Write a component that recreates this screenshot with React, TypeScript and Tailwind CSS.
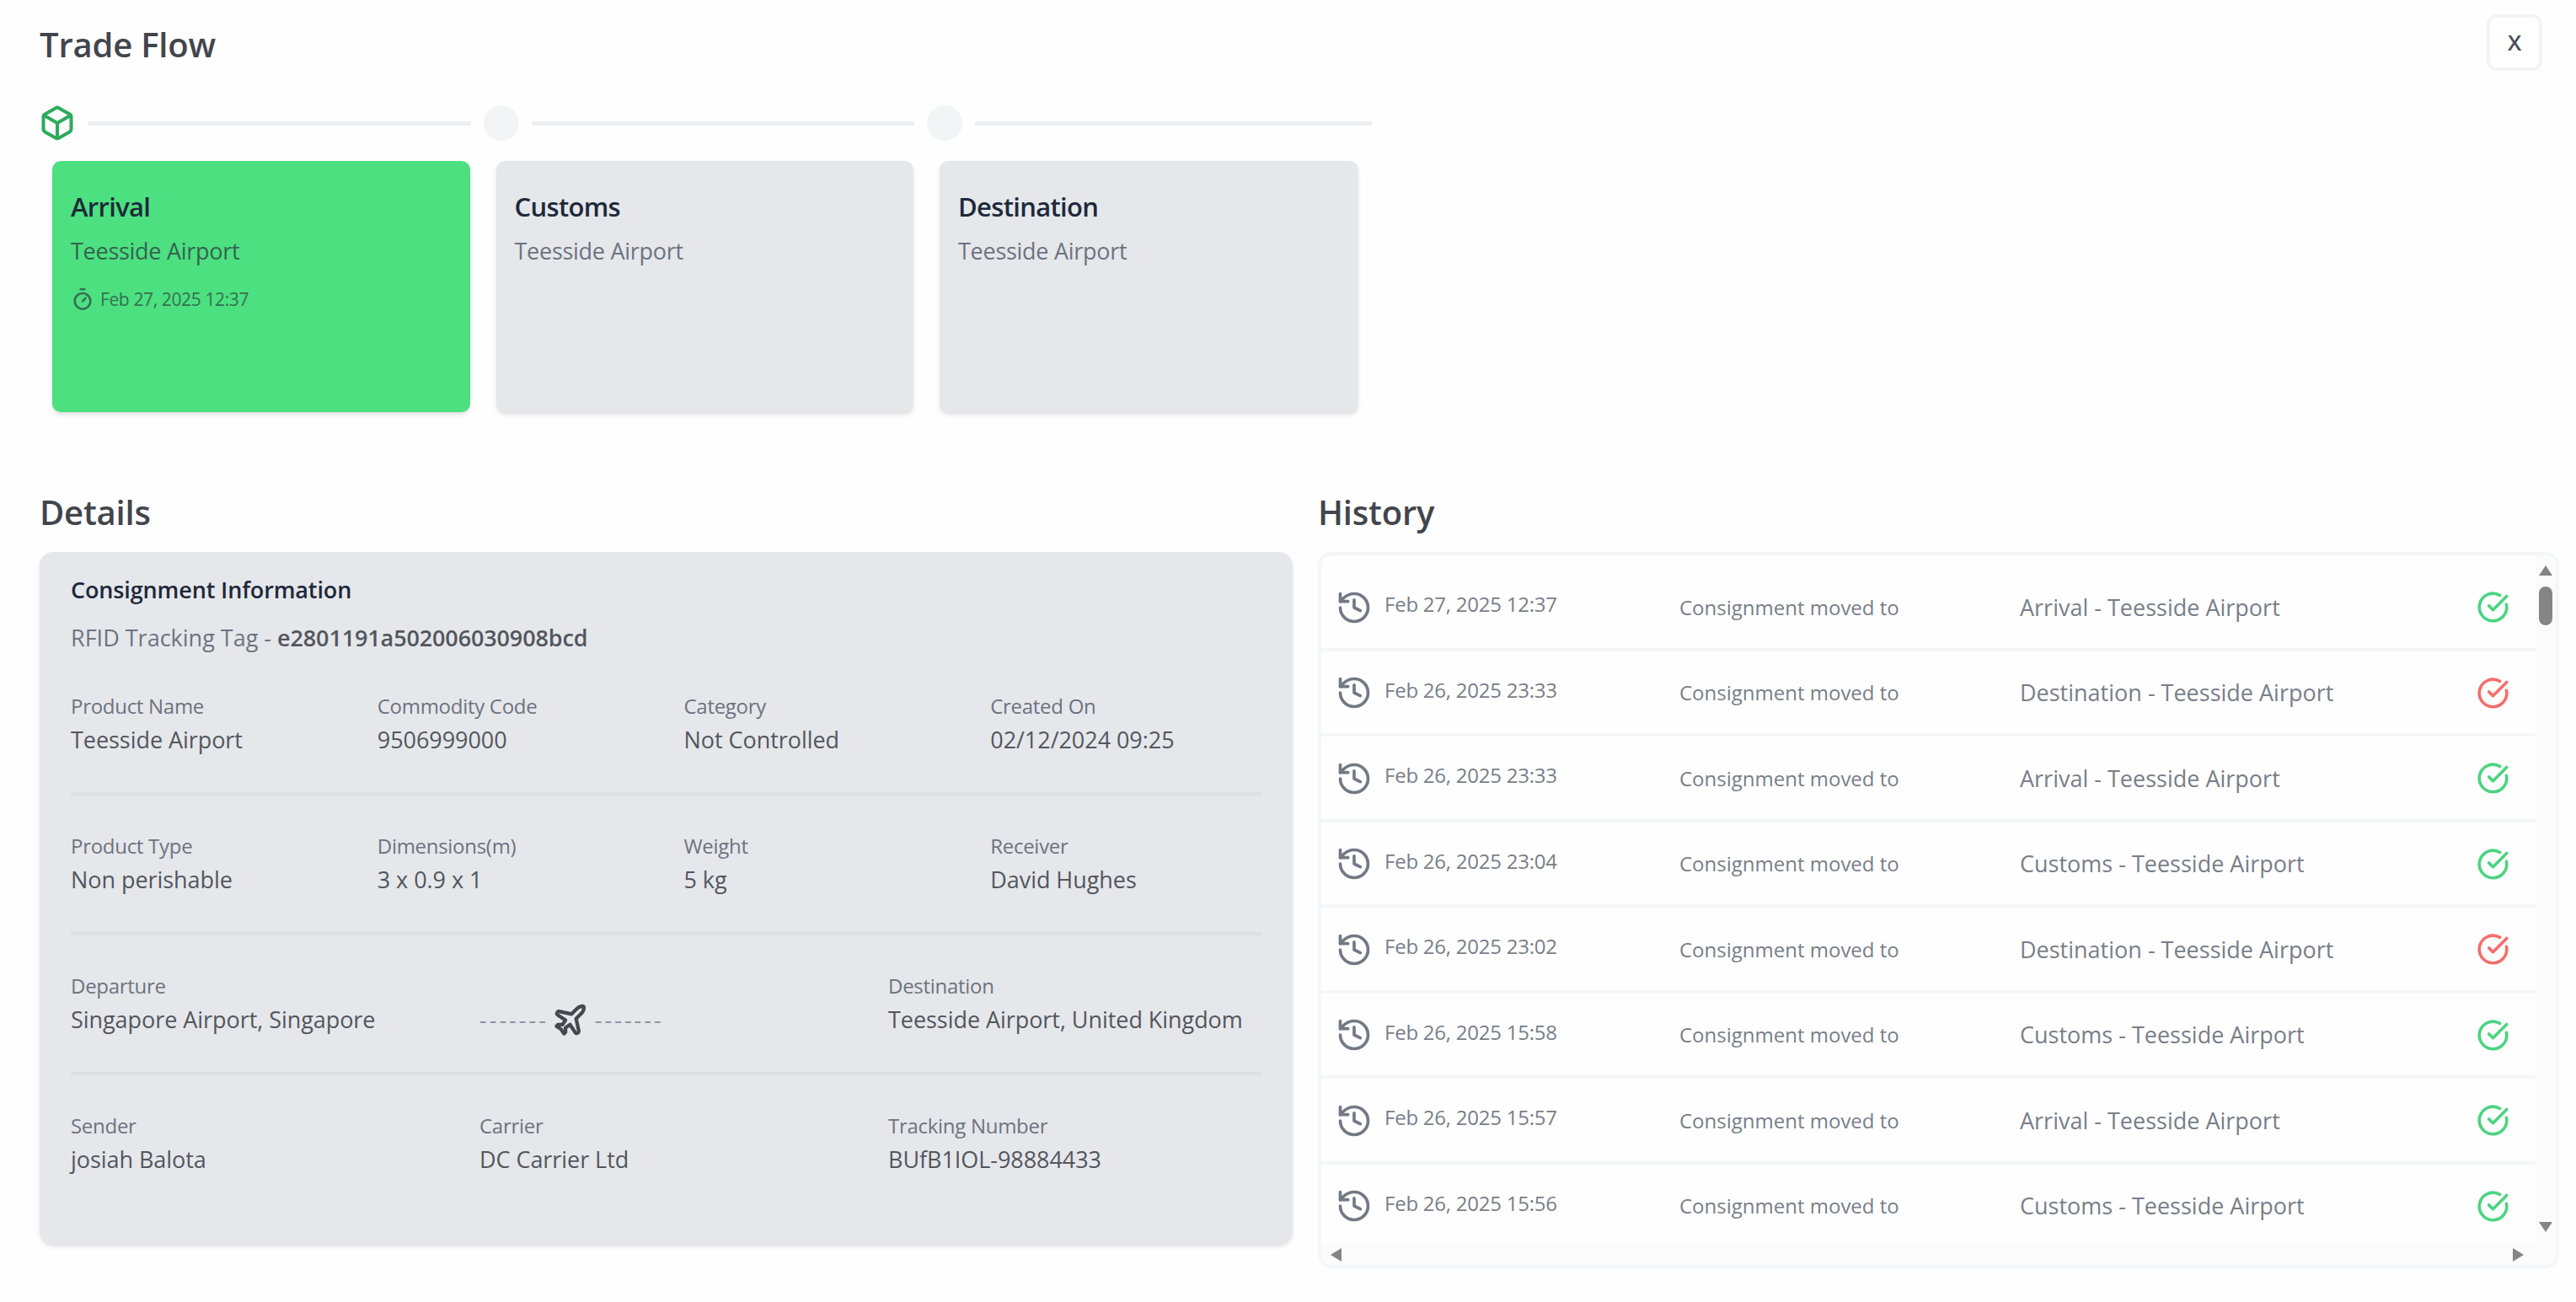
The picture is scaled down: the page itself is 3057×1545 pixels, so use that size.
import { Box, CircleCheckBig, History, Plane, Timer } from 'lucide-react';
import { clsx } from 'clsx';

/* ─── Data ───────────────────────────────────────────────────────────────── */

const STEPS: { title: string; place: string; date?: string }[] = [
  { title: 'Arrival', place: 'Teesside Airport', date: 'Feb 27, 2025 12:37' },
  { title: 'Customs', place: 'Teesside Airport' },
  { title: 'Destination', place: 'Teesside Airport' },
];

const PRODUCT = [
  { label: 'Product Name', value: 'Teesside Airport' },
  { label: 'Commodity Code', value: '9506999000' },
  { label: 'Category', value: 'Not Controlled' },
  { label: 'Created On', value: '02/12/2024 09:25' },
];

const SPECS = [
  { label: 'Product Type', value: 'Non perishable' },
  { label: 'Dimensions(m)', value: '3 x 0.9 x 1' },
  { label: 'Weight', value: '5 kg' },
  { label: 'Receiver', value: 'David Hughes' },
];

const SHIPPING = [
  { label: 'Sender', value: 'josiah Balota' },
  { label: 'Carrier', value: 'DC Carrier Ltd' },
  { label: 'Tracking Number', value: 'BUfB1IOL-98884433' },
];

const HISTORY = [
  { date: 'Feb 27, 2025 12:37', step: 'Arrival', ok: true },
  { date: 'Feb 26, 2025 23:33', step: 'Destination', ok: false },
  { date: 'Feb 26, 2025 23:33', step: 'Arrival', ok: true },
  { date: 'Feb 26, 2025 23:04', step: 'Customs', ok: true },
  { date: 'Feb 26, 2025 23:02', step: 'Destination', ok: false },
  { date: 'Feb 26, 2025 15:58', step: 'Customs', ok: true },
  { date: 'Feb 26, 2025 15:57', step: 'Arrival', ok: true },
  { date: 'Feb 26, 2025 15:56', step: 'Customs', ok: true },
];

/* ─── Shared ─────────────────────────────────────────────────────────────── */

function Heading({ children }: { children: string }) {
  return (
    <h2 className="text-[40px] leading-[56px] font-semibold tracking-[-0.005em] text-[#42454c]">{children}</h2>
  );
}

function Field({ label, value }: { label: string; value: string }) {
  return (
    <div className="whitespace-nowrap">
      <p className="text-[24px] leading-10 tracking-[-0.012em] text-[#6d737f]">{label}</p>
      <p className="text-[27px] leading-10 tracking-[-0.002em] text-[#53565d]">{value}</p>
    </div>
  );
}

function Divider() {
  return <hr className="mt-[42px] mb-[40px] h-1 border-0 bg-[#dddfe3]" />;
}

/* ─── Timeline ───────────────────────────────────────────────────────────── */

function Timeline() {
  return (
    <ol className="flex pl-[47px]">
      {STEPS.map(({ title, place, date }) => (
        <li key={title} className="group w-[526.5px] last:w-[543px]">
          <div className="flex h-[42px] items-center">
            {date ? (
              <span className="flex w-[42px] justify-center pr-[1px]">
                <Box size={44} strokeWidth={2.2} className="shrink-0 text-[#2bab5c]" />
              </span>
            ) : (
              <span className="size-[42px] rounded-full bg-gray-100" />
            )}
            <span className="mr-[15px] ml-[15px] h-[5px] flex-1 bg-[#eceff2]" />
          </div>

          <div
            className={clsx(
              'mt-[24px] mr-4 ml-[15px] h-[298px] rounded-[10px] px-[22px] pt-[34px] shadow-md group-last:mr-[31px]',
              date ? 'bg-[#4ce081]' : 'bg-gray-200',
            )}
          >
            <h3 className="text-[31px] leading-10 font-semibold tracking-[-0.022em] text-gray-800">{title}</h3>
            <p
              className={clsx(
                'mt-[13px] text-[27px] leading-10 tracking-[-0.01em]',
                date ? 'text-[#35644f]' : 'text-[#6d737f]',
              )}
            >
              {place}
            </p>
            {date && (
              <p className="mt-[17px] flex items-center gap-[7px] text-[21px] leading-10 tracking-[-0.018em] text-[#35704f]">
                <Timer size={28} strokeWidth={2.2} />
                {date}
              </p>
            )}
          </div>
        </li>
      ))}
    </ol>
  );
}

/* ─── Details ────────────────────────────────────────────────────────────── */

function Details() {
  return (
    <section className="w-[1487px]">
      <Heading>Details</Heading>
      <div className="mt-[19px] h-[821px] rounded-2xl bg-gray-200 px-[37px] pt-[25px] shadow-md">
        <h3 className="text-[27px] leading-10 font-semibold tracking-[-0.005em] text-gray-800">
          Consignment Information
        </h3>
        <p className="mt-[17px] text-[27px] leading-10 text-[#6d737f]">
          RFID Tracking Tag -{' '}
          <span className="font-semibold tracking-[-0.005em] text-[#53565d]">e2801191a502006030908bcd</span>
        </p>

        <div className="mt-[41px] grid grid-cols-4 gap-[42px]">
          {PRODUCT.map((f) => <Field key={f.label} {...f} />)}
        </div>
        <Divider />
        <div className="grid grid-cols-4 gap-[42px]">
          {SPECS.map((f) => <Field key={f.label} {...f} />)}
        </div>
        <Divider />
        <div className="grid grid-cols-3 gap-[42px]">
          <Field label="Departure" value="Singapore Airport, Singapore" />
          <div className="flex h-10 items-center self-end text-[27px] leading-10 tracking-[3px] text-[#8d93a0]">
            <span>-------</span>
            <Plane size={43} strokeWidth={2.4} className="mr-[8px] ml-[4px] text-[#45484e]" />
            <span>-------</span>
          </div>
          <Field label="Destination" value="Teesside Airport, United Kingdom" />
        </div>
        <Divider />
        <div className="grid grid-cols-3 gap-[42px]">
          {SHIPPING.map((f) => <Field key={f.label} {...f} />)}
        </div>
      </div>
    </section>
  );
}

/* ─── History ────────────────────────────────────────────────────────────── */

function HistoryList() {
  return (
    <section className="w-[1473px]">
      <Heading>History</Heading>
      <div className="mt-[19px] flex h-[850px] flex-col overflow-hidden rounded-2xl border-4 border-[#f5f6f8]">
        <div className="flex min-h-0 flex-1">
          <ul className="flex-1 overflow-hidden pt-[12px]">
            {HISTORY.map(({ date, step, ok }, i) => (
              <li
                key={i}
                className="flex h-[101.5px] items-center border-b-4 border-[#f5f6f7] pt-[2px] whitespace-nowrap text-[#787e89]"
              >
                <History size={44} strokeWidth={2} className="ml-[17px] shrink-0 text-[#737984]" />
                <span className="-mt-[7px] ml-[14px] w-[350px] text-[24px] leading-10 tracking-[-0.01em]">
                  {date}
                </span>
                <span className="w-[404px] text-[24px] leading-10">Consignment moved to</span>
                <span className="w-[542px] text-[27px] leading-10">{step} - Teesside Airport</span>
                <CircleCheckBig
                  size={39}
                  strokeWidth={2.2}
                  className={clsx('shrink-0', ok ? 'text-[#4bd481]' : 'text-[#f76c6c]')}
                />
              </li>
            ))}
          </ul>

          {/* Vertical scrollbar */}
          <div className="flex w-[24px] flex-col items-center justify-between bg-[#fbfbfb] pt-[12px] pb-[14px]">
            <div>
              <svg width="16" height="12" viewBox="0 0 16 12" fill="#858585">
                <path d="M8 0 16 12H0z" />
              </svg>
              <div className="mt-[13px] h-[46px] w-4 rounded-full bg-[#858585]" />
            </div>
            <svg width="16" height="12" viewBox="0 0 16 12" fill="#858585">
              <path d="M8 12 16 0H0z" />
            </svg>
          </div>
        </div>

        {/* Horizontal scrollbar */}
        <div className="flex h-[25px] items-center justify-between bg-[#fbfbfb] pr-[38px] pl-[11px]">
          <svg width="13" height="16" viewBox="0 0 13 16" fill="#858585">
            <path d="M0 8 13 0v16z" />
          </svg>
          <svg width="13" height="16" viewBox="0 0 13 16" fill="#858585">
            <path d="M13 8 0 0v16z" />
          </svg>
        </div>
      </div>
    </section>
  );
}

/* ─── App ────────────────────────────────────────────────────────────────── */

export default function App() {
  return (
    <main className="h-[1545px] w-[3057px] overflow-hidden bg-[#fefefe] font-['Open_Sans',sans-serif]">
      <header className="flex h-[125px] items-start justify-between pt-[17px] pr-[40px] pl-[47px]">
        <div className="mt-2">
          <Heading>Trade Flow</Heading>
        </div>
        <button
          type="button"
          className="flex h-[67px] w-[66px] items-center justify-center rounded-xl border-4 border-[#f3f3f3] bg-white pb-[1px] text-[26px] font-semibold text-[#4b4f57]"
        >
          X
        </button>
      </header>

      <Timeline />

      <div className="mt-[91px] flex gap-[30px] pl-[47px]">
        <Details />
        <HistoryList />
      </div>
    </main>
  );
}
